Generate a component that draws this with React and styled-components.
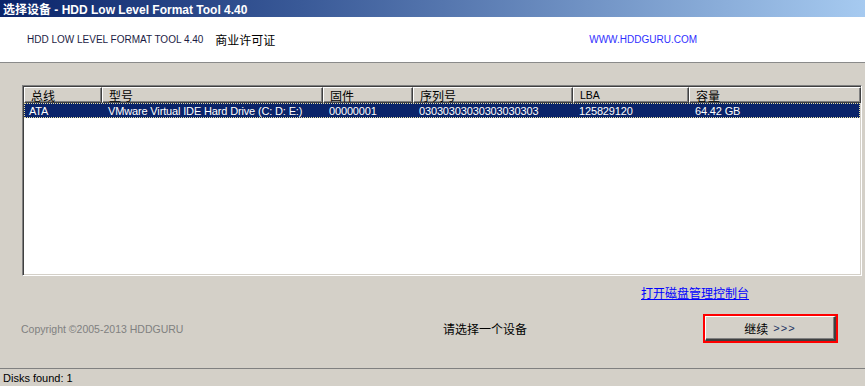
import React from 'react';
import styled, { createGlobalStyle } from 'styled-components';

const GlobalStyle = createGlobalStyle`
    html, body {
        margin: 0;
        padding: 0;
        background: #d4d0c8;
    }
    body {
        font-family: "Liberation Sans", "Noto Sans CJK SC", sans-serif;
        font-size: 11px;
        color: #000;
    }
`;

const UI_FONT = `"Liberation Sans", "Noto Sans CJK SC", sans-serif`;
const CJK_FONT = `"Noto Sans CJK SC", "Liberation Sans", sans-serif`;

const Window = styled.div`
    width: 865px;
    height: 386px;
    display: flex;
    flex-direction: column;
    background: #d4d0c8;
    overflow: hidden;
`;

const TitleBar = styled.div`
    height: 17px;
    display: flex;
    align-items: center;
    padding-left: 3px;
    background: linear-gradient(to right, #0a246a 0%, #3a5a98 35%, #a6caf0 100%);
    color: #fff;
    font-family: ${UI_FONT};
    font-weight: bold;
    font-size: 12px;
    white-space: nowrap;
`;

const Header = styled.div`
    height: 45px;
    display: flex;
    align-items: center;
    background: #fff;
    border-bottom: 1px solid #8a8a8a;
    padding-left: 27px;
    white-space: nowrap;
`;

const ProductName = styled.span`
    font-family: ${UI_FONT};
    font-size: 10px;
    color: #1c1c44;
`;

const License = styled.span`
    font-family: ${CJK_FONT};
    font-size: 12px;
    margin-left: 12px;
`;

const SiteLink = styled.span`
    font-family: ${UI_FONT};
    font-size: 10px;
    color: #3030ff;
    margin-left: auto;
    margin-right: 168px;
`;

const Body = styled.div`
    flex: 1;
    display: flex;
    flex-direction: column;
    padding: 22px 3px 0 22px;
`;

const TableFrame = styled.div`
    height: 191px;
    box-sizing: border-box;
    background: #fff;
    border-top: 1px solid #808080;
    border-left: 1px solid #808080;
    border-right: 1px solid #fff;
    border-bottom: 1px solid #fff;
    box-shadow: inset 1px 1px 0 #404040, inset -1px -1px 0 #d4d0c8;
    padding: 1px 1px 0 1px;
    display: flex;
    flex-direction: column;
`;

const Row = styled.div`
    display: grid;
    grid-template-columns: 78px 221px 90px 160px 116px 172px;
    height: ${p => (p.$head ? 16 : 15)}px;
`;

const HeadCell = styled.div`
    box-sizing: border-box;
    background: #d4d0c8;
    border-top: 1px solid #fff;
    border-left: 1px solid #fff;
    border-right: 1px solid #404040;
    border-bottom: 1px solid #404040;
    box-shadow: inset -1px -1px 0 #808080;
    padding-left: 6px;
    display: flex;
    align-items: center;
    font-family: ${p => (p.$cjk ? CJK_FONT : UI_FONT)};
    font-size: ${p => (p.$cjk ? 12 : 10.5)}px;
    white-space: nowrap;
    overflow: hidden;
`;

const SelectedRow = styled(Row)`
    background: #0a246a;
    color: #fff;
    outline: 1px dotted #e8e0a0;
    outline-offset: -1px;
`;

const Cell = styled.div`
    padding-left: ${p => p.$pad || 6}px;
    display: flex;
    align-items: center;
    font-family: ${UI_FONT};
    font-size: 11px;
    letter-spacing: -0.15px;
    white-space: nowrap;
    overflow: hidden;
`;

const LinkRow = styled.div`
    margin-top: 10px;
    height: 14px;
    display: flex;
    padding-left: 619px;
`;

const DiskLink = styled.a`
    font-family: ${CJK_FONT};
    font-size: 12px;
    line-height: 14px;
    color: #0000ff;
    text-decoration: underline;
    cursor: pointer;
    white-space: nowrap;
`;

const BottomRow = styled.div`
    margin-top: 14px;
    display: grid;
    grid-template-columns: 421px 260px 135px;
    align-items: center;
    height: 29px;
`;

const Copyright = styled.span`
    font-family: ${UI_FONT};
    font-size: 10.5px;
    color: #808080;
    margin-left: -1px;
    white-space: nowrap;
`;

const Prompt = styled.span`
    font-family: ${CJK_FONT};
    font-size: 12px;
    white-space: nowrap;
`;

const FocusRing = styled.div`
    box-sizing: border-box;
    height: 29px;
    border: 2px solid #ff0000;
    display: flex;
`;

const Button = styled.button`
    flex: 1;
    box-sizing: border-box;
    margin: 0;
    padding: 0;
    background: #d4d0c8;
    border: none;
    border-top: 1px solid #fff;
    border-left: 1px solid #fff;
    border-right: 2px solid #404040;
    border-bottom: 2px solid #404040;
    box-shadow: inset -1px -1px 0 #808080;
    font-family: ${CJK_FONT};
    font-size: 12px;
    display: flex;
    align-items: center;
    justify-content: center;
    gap: 5px;
    cursor: pointer;
`;

const Arrows = styled.span`
    font-family: ${UI_FONT};
    font-size: 11px;
    color: #203060;
    letter-spacing: 1px;
`;

const StatusBar = styled.div`
    height: 17px;
    border-top: 1px solid #808080;
    display: flex;
    align-items: center;
    padding-left: 3px;
    font-family: ${UI_FONT};
    font-size: 11px;
`;

const columns = [
    { title: '总线', cjk: true },
    { title: '型号', cjk: true },
    { title: '固件', cjk: true },
    { title: '序列号', cjk: true },
    { title: 'LBA', cjk: false },
    { title: '容量', cjk: true },
];

const drives = [
    {
        bus: 'ATA',
        model: 'VMware Virtual IDE Hard Drive (C: D: E:)',
        firmware: '00000001',
        serial: '03030303030303030303',
        lba: '125829120',
        size: '64.42 GB',
    },
];

function App() {
    return (
        <Window>
            <GlobalStyle />
            <TitleBar>选择设备 - HDD Low Level Format Tool 4.40</TitleBar>
            <Header>
                <ProductName>HDD LOW LEVEL FORMAT TOOL 4.40</ProductName>
                <License>商业许可证</License>
                <SiteLink>WWW.HDDGURU.COM</SiteLink>
            </Header>
            <Body>
                <TableFrame>
                    <Row $head>
                        {columns.map(c => (
                            <HeadCell key={c.title} $cjk={c.cjk}>{c.title}</HeadCell>
                        ))}
                    </Row>
                    {drives.map(d => (
                        <SelectedRow key={d.serial}>
                            <Cell $pad={5}>{d.bus}</Cell>
                            <Cell>{d.model}</Cell>
                            <Cell>{d.firmware}</Cell>
                            <Cell>{d.serial}</Cell>
                            <Cell>{d.lba}</Cell>
                            <Cell>{d.size}</Cell>
                        </SelectedRow>
                    ))}
                </TableFrame>
                <LinkRow>
                    <DiskLink>打开磁盘管理控制台</DiskLink>
                </LinkRow>
                <BottomRow>
                    <Copyright>Copyright ©2005-2013 HDDGURU</Copyright>
                    <Prompt>请选择一个设备</Prompt>
                    <FocusRing>
                        <Button>继续 <Arrows>&gt;&gt;&gt;</Arrows></Button>
                    </FocusRing>
                </BottomRow>
            </Body>
            <StatusBar>Disks found: 1</StatusBar>
        </Window>
    );
}

export default App;
